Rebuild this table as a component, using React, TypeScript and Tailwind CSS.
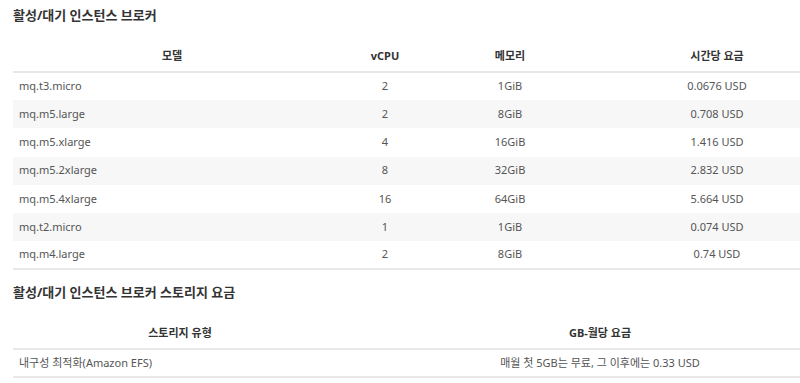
const brokers = [
  { model: "mq.t3.micro", vcpu: "2", mem: "1GiB", price: "0.0676 USD" },
  { model: "mq.m5.large", vcpu: "2", mem: "8GiB", price: "0.708 USD" },
  { model: "mq.m5.xlarge", vcpu: "4", mem: "16GiB", price: "1.416 USD" },
  { model: "mq.m5.2xlarge", vcpu: "8", mem: "32GiB", price: "2.832 USD" },
  { model: "mq.m5.4xlarge", vcpu: "16", mem: "64GiB", price: "5.664 USD" },
  { model: "mq.t2.micro", vcpu: "1", mem: "1GiB", price: "0.074 USD" },
  { model: "mq.m4.large", vcpu: "2", mem: "8GiB", price: "0.74 USD" },
];

const font = "font-['Noto_Sans','Noto_Sans_CJK_KR',sans-serif]";

export default function App() {
  return (
    <div className={`w-[800px] h-[383px] overflow-hidden bg-white pl-[13px] ${font}`}>
      <h3 className="pt-[7px] text-[13px] leading-[16px] font-bold text-[#333]">활성/대기 인스턴스 브로커</h3>

      <table className="mt-[19px] w-[840px] table-fixed border-collapse text-[11px] text-[#555]">
        <colgroup>
          <col className="w-[318px]" />
          <col className="w-[108px]" />
          <col className="w-[142px]" />
          <col className="w-[272px]" />
        </colgroup>
        <thead>
          <tr className="h-[30px] border-b-2 border-[#e8e8e8] text-[#333] font-bold">
            <th className="text-center">모델</th>
            <th className="text-center">vCPU</th>
            <th className="text-center">메모리</th>
            <th className="text-center">시간당 요금</th>
          </tr>
        </thead>
        <tbody className="border-b-2 border-[#e8e8e8]">
          {brokers.map((b, i) => (
            <tr key={b.model} className={`h-[28.2px] ${i % 2 === 1 ? "bg-[#f7f7f7]" : "bg-white"}`}>
              <td className="pl-[6px] text-left">{b.model}</td>
              <td className="text-center">{b.vcpu}</td>
              <td className="text-center">{b.mem}</td>
              <td className="text-center">{b.price}</td>
            </tr>
          ))}
        </tbody>
      </table>

      <h3 className="mt-[14px] text-[13px] leading-[16px] font-bold text-[#333]">활성/대기 인스턴스 브로커 스토리지 요금</h3>

      <table className="mt-[18px] w-[840px] table-fixed border-collapse text-[11px] text-[#555]">
        <colgroup>
          <col className="w-[334px]" />
          <col className="w-[506px]" />
        </colgroup>
        <thead>
          <tr className="h-[31px] border-b-2 border-[#e8e8e8] text-[#333] font-bold">
            <th className="text-center">스토리지 유형</th>
            <th className="text-center">GB-월당 요금</th>
          </tr>
        </thead>
        <tbody>
          <tr className="h-[28px] border-b-2 border-[#e8e8e8]">
            <td className="pl-[6px] text-left">내구성 최적화(Amazon EFS)</td>
            <td className="text-center">매월 첫 5GB는 무료, 그 이후에는 0.33 USD</td>
          </tr>
        </tbody>
      </table>
    </div>
  );
}
